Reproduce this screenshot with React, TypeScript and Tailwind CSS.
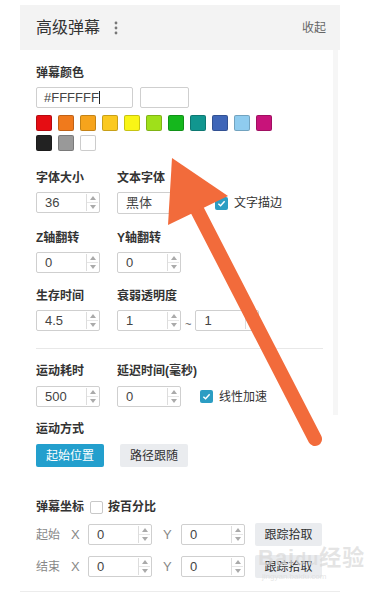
import React from 'react';

const font = "font-['Liberation_Sans','Noto_Sans_CJK_SC',sans-serif]";

const swatchesTop = ['#e50d13', '#f07a1c', '#f6a41c', '#fbc91f', '#f9f516', '#9fe01a', '#15b71d', '#11968f', '#3f66b8', '#8fccef', '#c8137a'];
const swatchesBottom = ['#222222', '#999999', '#ffffff'];

const Label: React.FC<{ children: React.ReactNode; className?: string }> = ({ children, className = '' }) => (
  <div className={`h-[16px] leading-[16px] text-[12px] font-bold text-[#333] ${className}`}>{children}</div>
);

const NumberBox: React.FC<{ value: string; w?: string }> = ({ value, w = 'w-[64px]' }) => (
  <div className={`${w} h-[21px] border border-[#cfcfcf] rounded-[2px] flex bg-white`}>
    <div className="flex-1 pl-[8px] text-[13px] leading-[19px] text-[#444]">{value}</div>
    <div className="w-[12px] my-[1px] mr-[1px] border-l border-[#ddd] flex flex-col">
      <div className="flex-1 flex items-center justify-center border-b border-[#e6e6e6]">
        <span className="block w-0 h-0 border-x-[3px] border-x-transparent border-b-[4px] border-b-[#aaa]" />
      </div>
      <div className="flex-1 flex items-center justify-center">
        <span className="block w-0 h-0 border-x-[3px] border-x-transparent border-t-[4px] border-t-[#aaa]" />
      </div>
    </div>
  </div>
);

const Check: React.FC<{ on?: boolean }> = ({ on }) =>
  on ? (
    <span className="shrink-0 w-[13px] h-[13px] rounded-[2px] bg-[#2b9dc3] flex items-center justify-center">
      <svg width="9" height="9" viewBox="0 0 10 10">
        <path d="M1.5 5.2 L4 7.5 L8.5 2.5" fill="none" stroke="#fff" strokeWidth="1.6" />
      </svg>
    </span>
  ) : (
    <span className="shrink-0 block w-[13px] h-[13px] rounded-[2px] border border-[#c8c8c8] bg-white" />
  );

export default function App() {
  return (
    <div className={`relative w-[372px] h-[592px] bg-white overflow-hidden ${font}`}>
      <div className="ml-[20px] mt-[5px] w-[320px]">
        <header className="h-[45px] bg-[#f3f3f3] flex items-center pl-[16px] pr-[14px]">
          <span className="text-[16px] text-[#333]">高级弹幕</span>
          <svg className="ml-[14px]" width="4" height="14" viewBox="0 0 4 14">
            <circle cx="2" cy="2" r="1.4" fill="#777" />
            <circle cx="2" cy="7" r="1.4" fill="#777" />
            <circle cx="2" cy="12" r="1.4" fill="#777" />
          </svg>
          <span className="ml-auto text-[12px] text-[#666]">收起</span>
        </header>

        <div className="flex">
          <div className="flex-1 pl-[16px] pr-[10px] pt-[15px]">
            <Label>弹幕颜色</Label>
            <div className="mt-[6px] flex gap-[7px]">
              <div className="w-[97px] h-[21px] border border-[#cfcfcf] rounded-[2px] pl-[7px] text-[13px] leading-[19px] text-[#444]">
                #FFFFFF<span className="inline-block w-[1px] h-[13px] bg-[#222] align-[-2px]" />
              </div>
              <div className="w-[49px] h-[21px] border border-[#cfcfcf] rounded-[2px] bg-white" />
            </div>
            <div className="mt-[7px] flex gap-[6px]">
              {swatchesTop.map((c) => (
                <span key={c} className="w-[16px] h-[16px] rounded-[2px] border border-black/20" style={{ background: c }} />
              ))}
            </div>
            <div className="mt-[4px] flex gap-[6px]">
              {swatchesBottom.map((c) => (
                <span key={c} className="w-[16px] h-[16px] rounded-[2px] border border-black/20" style={{ background: c }} />
              ))}
            </div>

            <div className="mt-[19px] flex">
              <div className="w-[81px]">
                <Label>字体大小</Label>
                <div className="mt-[6px]"><NumberBox value="36" /></div>
              </div>
              <div>
                <Label>文本字体</Label>
                <div className="mt-[6px] flex items-center">
                  <div className="w-[80px] h-[22px] border border-[#cfcfcf] rounded-[2px] pl-[8px] flex items-center text-[13px] text-[#444]">
                    黑体
                    <span className="ml-auto mr-[6px] block w-0 h-0 border-x-[4px] border-x-transparent border-t-[4px] border-t-[#888]" />
                  </div>
                  <div className="ml-[18px] flex items-center gap-[6px]">
                    <Check on />
                    <span className="text-[12px] text-[#333]">文字描边</span>
                  </div>
                </div>
              </div>
            </div>

            <div className="mt-[16px] flex">
              <div className="w-[81px]">
                <Label>Z轴翻转</Label>
                <div className="mt-[6px]"><NumberBox value="0" /></div>
              </div>
              <div>
                <Label>Y轴翻转</Label>
                <div className="mt-[6px]"><NumberBox value="0" /></div>
              </div>
            </div>

            <div className="mt-[15px] flex">
              <div className="w-[81px]">
                <Label>生存时间</Label>
                <div className="mt-[6px]"><NumberBox value="4.5" /></div>
              </div>
              <div>
                <Label>衰弱透明度</Label>
                <div className="mt-[6px] flex items-end">
                  <NumberBox value="1" />
                  <span className="mx-[4px] text-[11px] leading-[14px] text-[#555]">~</span>
                  <NumberBox value="1" />
                </div>
              </div>
            </div>

            <div className="mt-[17px] h-px bg-[#e8e8e8]" />

            <div className="mt-[14px] flex">
              <div className="w-[81px]">
                <Label>运动耗时</Label>
                <div className="mt-[7px]"><NumberBox value="500" /></div>
              </div>
              <div>
                <Label>延迟时间(毫秒)</Label>
                <div className="mt-[7px] flex items-center">
                  <NumberBox value="0" />
                  <div className="ml-[19px] flex items-center gap-[6px]">
                    <Check on />
                    <span className="text-[12px] text-[#333]">线性加速</span>
                  </div>
                </div>
              </div>
            </div>

            <Label className="mt-[14px]">运动方式</Label>
            <div className="mt-[7px] flex gap-[16px]">
              <button className="w-[68px] h-[23px] bg-[#239fcd] text-white text-[12px] rounded-[2px]">起始位置</button>
              <button className="w-[68px] h-[23px] bg-[#eaecef] text-[#333] text-[12px] rounded-[2px]">路径跟随</button>
            </div>
          </div>
          <div className="w-[5px] h-[365px] bg-[#f6f6f6] mr-[2px]" />
        </div>

        <div className="pl-[16px] pr-[17px] pt-[32px] pb-[13px] border-b border-[#ececec]">
          <div className="flex items-center h-[16px]">
            <Label>弹幕坐标</Label>
            <div className="ml-[6px] mr-[5px]"><Check /></div>
            <Label>按百分比</Label>
          </div>
          {['起始', '结束'].map((t, i) => (
            <div key={t} className={`${i === 0 ? 'mt-[8px]' : 'mt-[9px]'} h-[23px] flex items-center text-[12px] text-[#888]`}>
              <span className="w-[35px]">{t}</span>
              <span className="w-[17px] text-[13px]">X</span>
              <NumberBox value="0" />
              <span className="w-[29px] pl-[11px] text-[13px]">Y</span>
              <NumberBox value="0" />
              <button className="ml-[10px] w-[67px] h-[23px] bg-[#eaecef] text-[#333] text-[12px] rounded-[2px]">跟踪拾取</button>
            </div>
          ))}
        </div>
      </div>

      <div className="absolute left-[258px] top-[546px] text-[22px] leading-[24px] font-bold text-[#d9d9d9]/70 tracking-[1px]">
        Bai<span className="text-[18px]">du</span>经验
      </div>
      <div className="absolute left-[262px] top-[572px] text-[8px] leading-[10px] text-[#dadada]/70">jingyan.baidu.com</div>

      <svg className="absolute inset-0 pointer-events-none" width="372" height="592" viewBox="0 0 372 592">
        <line x1="192" y1="200" x2="315" y2="439" stroke="#f26b3b" strokeWidth="14" strokeLinecap="round" />
        <polygon points="172,158 168,225 228,196" fill="#f26b3b" />
      </svg>
    </div>
  );
}
